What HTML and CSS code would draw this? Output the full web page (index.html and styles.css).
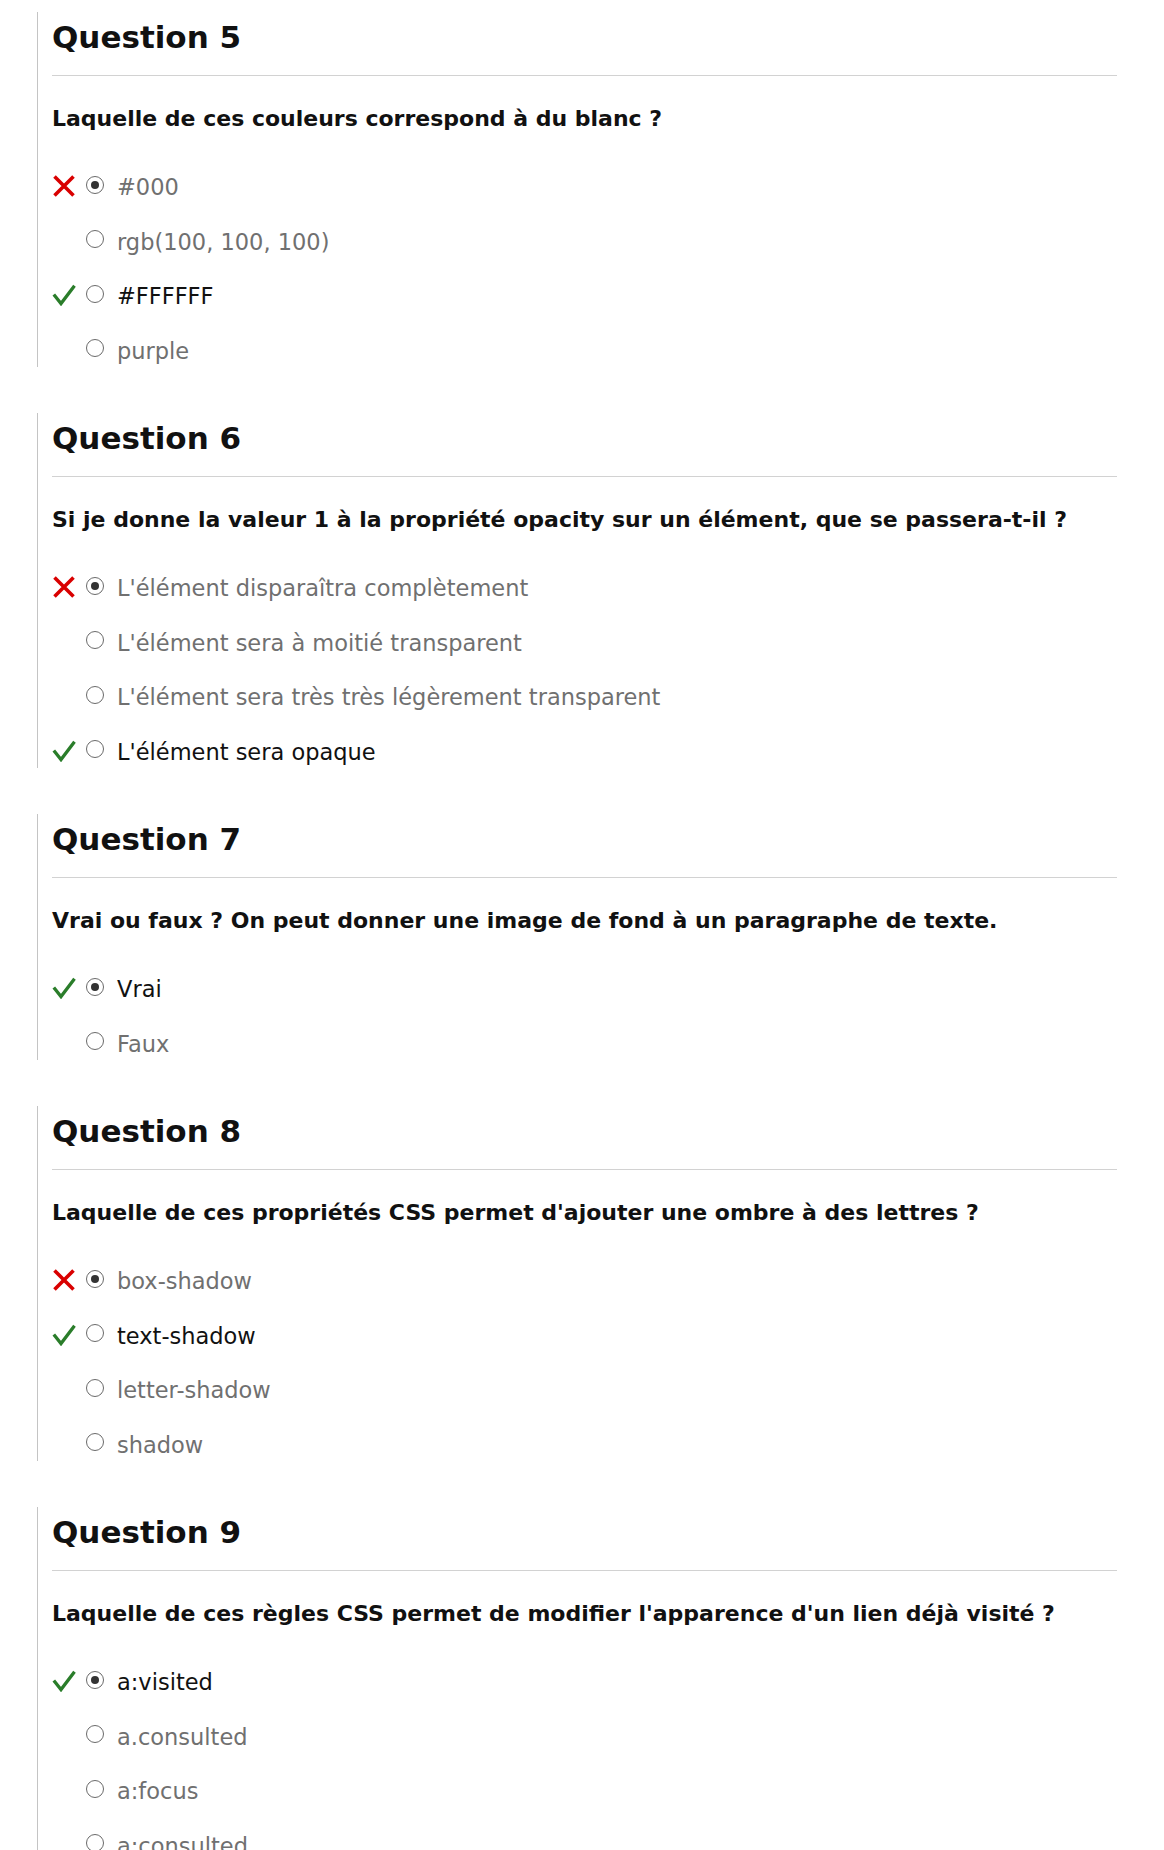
FILE: index.html
```html
<!DOCTYPE html>
<html lang="fr">
<head>
<meta charset="utf-8">
<title>Quiz CSS</title>
<link rel="stylesheet" href="styles.css">
</head>
<body>
<main class="quiz">

  <section class="q">
    <h2 class="q-title">Question 5</h2>
    <p class="q-text">Laquelle de ces couleurs correspond à du blanc ?</p>
    <ul class="opts">
      <li class="opt"><span class="mark"><svg class="ico" viewBox="0 0 24 22"><path class="ico-x" d="M2.5 1.5 L21.5 20.5 M21.5 1.5 L2.5 20.5"/></svg></span><span class="radio on"></span><span class="label">#000</span></li>
      <li class="opt"><span class="mark"></span><span class="radio"></span><span class="label">rgb(100, 100, 100)</span></li>
      <li class="opt ok"><span class="mark"><svg class="ico" viewBox="0 0 24 22"><path class="ico-v" d="M1.8 10.5 L9 19.6 L22.5 1.8"/></svg></span><span class="radio"></span><span class="label">#FFFFFF</span></li>
      <li class="opt"><span class="mark"></span><span class="radio"></span><span class="label">purple</span></li>
    </ul>
  </section>

  <section class="q">
    <h2 class="q-title">Question 6</h2>
    <p class="q-text">Si je donne la valeur 1 à la propriété opacity sur un élément, que se passera-t-il ?</p>
    <ul class="opts">
      <li class="opt"><span class="mark"><svg class="ico" viewBox="0 0 24 22"><path class="ico-x" d="M2.5 1.5 L21.5 20.5 M21.5 1.5 L2.5 20.5"/></svg></span><span class="radio on"></span><span class="label">L'élément disparaîtra complètement</span></li>
      <li class="opt"><span class="mark"></span><span class="radio"></span><span class="label">L'élément sera à moitié transparent</span></li>
      <li class="opt"><span class="mark"></span><span class="radio"></span><span class="label">L'élément sera très très légèrement transparent</span></li>
      <li class="opt ok"><span class="mark"><svg class="ico" viewBox="0 0 24 22"><path class="ico-v" d="M1.8 10.5 L9 19.6 L22.5 1.8"/></svg></span><span class="radio"></span><span class="label">L'élément sera opaque</span></li>
    </ul>
  </section>

  <section class="q">
    <h2 class="q-title">Question 7</h2>
    <p class="q-text">Vrai ou faux ? On peut donner une image de fond à un paragraphe de texte.</p>
    <ul class="opts">
      <li class="opt ok"><span class="mark"><svg class="ico" viewBox="0 0 24 22"><path class="ico-v" d="M1.8 10.5 L9 19.6 L22.5 1.8"/></svg></span><span class="radio on"></span><span class="label">Vrai</span></li>
      <li class="opt"><span class="mark"></span><span class="radio"></span><span class="label">Faux</span></li>
    </ul>
  </section>

  <section class="q">
    <h2 class="q-title">Question 8</h2>
    <p class="q-text">Laquelle de ces propriétés CSS permet d'ajouter une ombre à des lettres ?</p>
    <ul class="opts">
      <li class="opt"><span class="mark"><svg class="ico" viewBox="0 0 24 22"><path class="ico-x" d="M2.5 1.5 L21.5 20.5 M21.5 1.5 L2.5 20.5"/></svg></span><span class="radio on"></span><span class="label">box-shadow</span></li>
      <li class="opt ok"><span class="mark"><svg class="ico" viewBox="0 0 24 22"><path class="ico-v" d="M1.8 10.5 L9 19.6 L22.5 1.8"/></svg></span><span class="radio"></span><span class="label">text-shadow</span></li>
      <li class="opt"><span class="mark"></span><span class="radio"></span><span class="label">letter-shadow</span></li>
      <li class="opt"><span class="mark"></span><span class="radio"></span><span class="label">shadow</span></li>
    </ul>
  </section>

  <section class="q">
    <h2 class="q-title">Question 9</h2>
    <p class="q-text">Laquelle de ces règles CSS permet de modifier l'apparence d'un lien déjà visité ?</p>
    <ul class="opts">
      <li class="opt ok"><span class="mark"><svg class="ico" viewBox="0 0 24 22"><path class="ico-v" d="M1.8 10.5 L9 19.6 L22.5 1.8"/></svg></span><span class="radio on"></span><span class="label">a:visited</span></li>
      <li class="opt"><span class="mark"></span><span class="radio"></span><span class="label">a.consulted</span></li>
      <li class="opt"><span class="mark"></span><span class="radio"></span><span class="label">a:focus</span></li>
      <li class="opt"><span class="mark"></span><span class="radio"></span><span class="label">a:consulted</span></li>
    </ul>
  </section>

</main>
</body>
</html>
```
FILE: styles.css
```css
html, body {
  margin: 0;
  padding: 0;
  background: #ffffff;
}

body {
  font-family: "DejaVu Sans", "Liberation Sans", sans-serif;
  color: #111111;
}

.quiz {
  padding: 12px 47px 0 37px;
}

.q {
  border-left: 1px solid #c4c4c4;
  padding: 5px 0 0 14px;
  margin: 0 0 46.5px 0;
}

.q-title {
  margin: 0;
  font-size: 31px;
  line-height: 40px;
  font-weight: 700;
  color: #111111;
  padding-bottom: 18px;
  border-bottom: 1px solid #d2d2d2;
}

.q-text {
  margin: 27.5px 0 0 0;
  font-size: 22px;
  line-height: 30px;
  font-weight: 700;
  color: #111111;
}

.opts {
  list-style: none;
  margin: 37.5px 0 0 0;
  padding: 0;
  display: flex;
  flex-direction: column;
  gap: 22.5px;
}

.opt {
  display: flex;
  align-items: center;
  height: 32px;
  font-size: 22.5px;
  line-height: 32px;
  color: #707070;
}

.opt.ok {
  color: #111111;
}

.mark {
  width: 34px;
  height: 22px;
  flex: none;
  margin-bottom: 2px;
}

.ico {
  display: block;
  width: 24px;
  height: 22px;
}

.ico path {
  fill: none;
  stroke-linecap: butt;
  stroke-linejoin: miter;
}

.ico-x {
  stroke: #d90000;
  stroke-width: 3.6;
}

.ico-v {
  stroke: #2a7d2a;
  stroke-width: 3.3;
}

.radio {
  flex: none;
  box-sizing: border-box;
  width: 18px;
  height: 18px;
  border: 1.6px solid #6a6a6a;
  border-radius: 50%;
  margin: 0 13px 5px 0;
  background: #ffffff;
  display: flex;
  align-items: center;
  justify-content: center;
}

.radio.on::after {
  content: "";
  width: 8px;
  height: 8px;
  border-radius: 50%;
  background: #333333;
}

.label {
  white-space: nowrap;
}
```
